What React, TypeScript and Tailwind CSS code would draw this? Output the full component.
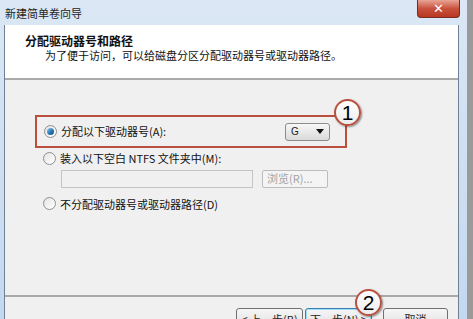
import React from "react";

const cjk = { fontFamily: '"Noto Sans CJK SC", "Liberation Sans", sans-serif' };

function Radio({ checked }: { checked?: boolean }) {
  return (
    <span className="relative inline-flex h-[13px] w-[13px] shrink-0 items-center justify-center rounded-full border border-[#8f8f8f] bg-gradient-to-br from-[#e4e4e4] to-[#ffffff]">
      {checked && (
        <span className="h-[7px] w-[7px] rounded-full bg-gradient-to-br from-[#8fd0f0] via-[#2d7fb8] to-[#0d4e86]" />
      )}
    </span>
  );
}

function Marker({ n }: { n: string }) {
  return (
    <div className="flex h-[27px] w-[27px] items-center justify-center rounded-full border-2 border-[#b9503f] bg-gradient-to-b from-white to-[#ececec] shadow-[1px_1px_2px_rgba(0,0,0,0.45)]">
      <span className="text-[21px] leading-none text-black" style={{ fontFamily: '"Liberation Sans", sans-serif' }}>
        {n}
      </span>
    </div>
  );
}

function Button({ label, focused, x }: { label: string; focused?: boolean; x: string }) {
  return (
    <div
      className={`${x} flex h-[23px] items-start justify-center rounded-[3px] border bg-gradient-to-b from-[#f6f6f6] to-[#dcdcdc] pt-[2px] text-[11px] leading-[16px] text-[#222] ${
        focused ? "border-[#3c7fb1] shadow-[inset_0_0_0_1px_#9fdcf7]" : "border-[#707070]"
      }`}
    >
      {label}
    </div>
  );
}

export default function App() {
  return (
    <div className="flex h-[319px] w-[473px] overflow-hidden bg-[#9a9a9a]" style={cjk}>
      <div className="flex w-[467px] flex-col bg-gradient-to-b from-[#dbe7f4] to-[#c4d8ee]">
        {/* title bar */}
        <div className="flex h-[25px] shrink-0 items-start">
          <span className="ml-[5px] mt-[5px] text-[11px] leading-[16px] text-[#1e1e1e]">新建简单卷向导</span>
          <div className="ml-auto mr-[7px] flex h-[18px] w-[43px] items-center justify-center rounded-b-[4px] border border-t-0 border-[#7a2a22] bg-gradient-to-b from-[#e8a495] via-[#c8523d] to-[#b8361f]">
            <span className="text-[13px] font-bold leading-none text-white" style={{ fontFamily: '"DejaVu Sans", sans-serif' }}>
              ✕
            </span>
          </div>
        </div>

        {/* body */}
        <div className="ml-[4px] mr-[8px] flex flex-1 flex-col border-l border-r border-[#6f8196] bg-[#f0f0f0]">
          <div className="h-[55px] shrink-0 border-b-2 border-[#a9a9a9] bg-white">
            <div className="ml-[20px] mt-[9px] text-[12px] font-bold leading-[14px] text-[#111]">分配驱动器号和路径</div>
            <div className="ml-[40px] mt-0 text-[11px] leading-[14px] text-[#111]">
              为了便于访问，可以给磁盘分区分配驱动器号或驱动器路径。
            </div>
          </div>

          <div className="relative flex-1">
            <div className="ml-[30px] mt-[35px] flex h-[33px] w-[312px] items-center border-2 border-[#b9503f] pl-[7px]">
              <Radio checked />
              <span className="ml-[4px] text-[11px] text-[#111]">分配以下驱动器号(A):</span>
              <div className="ml-auto mr-[15px] flex h-[18px] w-[45px] items-center rounded-[3px] border border-[#8c8c8c] bg-gradient-to-b from-[#f7f7f7] to-[#dadada] pl-[5px] pr-[5px]">
                <span className="text-[10px] leading-none text-[#222]" style={{ fontFamily: '"Liberation Sans", sans-serif' }}>G</span>
                <span className="ml-auto h-0 w-0 border-x-[4px] border-t-[5px] border-x-transparent border-t-[#111]" />
              </div>
            </div>
            <div className="absolute left-[329px] top-[19px]">
              <Marker n="1" />
            </div>

            <div className="ml-[38px] mt-[2px] flex items-center">
              <Radio />
              <span className="ml-[4px] text-[11px] text-[#111]">装入以下空白 NTFS 文件夹中(M):</span>
            </div>
            <div className="ml-[56px] mt-[3px] flex items-center">
              <div className="h-[18px] w-[192px] border border-[#c4c4c4] bg-[#f0f0f0]" />
              <div className="ml-[9px] flex h-[18px] w-[66px] items-center rounded-[2px] border border-[#bcbcbc] bg-[#f4f4f4] pl-[4px] text-[11px] text-[#a3a3a3]">
                浏览(R)...
              </div>
            </div>

            <div className="ml-[38px] mt-[8px] flex items-center">
              <Radio />
              <span className="ml-[4px] text-[11px] text-[#111]">不分配驱动器号或驱动器路径(D)</span>
            </div>
          </div>

          <div className="relative h-[24px] shrink-0 border-t-2 border-[#a9a9a9]">
            <div className="mt-[11px] flex">
              <Button x="ml-[231px] w-[67px]" label="< 上一步(B)" />
              <Button x="ml-[2px] w-[67px]" label="下一步(N) >" focused />
              <Button x="ml-[11px] w-[65px]" label="取消" />
            </div>
            <div className="absolute left-[350px] top-[-8px]">
              <Marker n="2" />
            </div>
          </div>
        </div>
      </div>
      <div className="w-[6px] bg-[#9a9a9a]" />
    </div>
  );
}
